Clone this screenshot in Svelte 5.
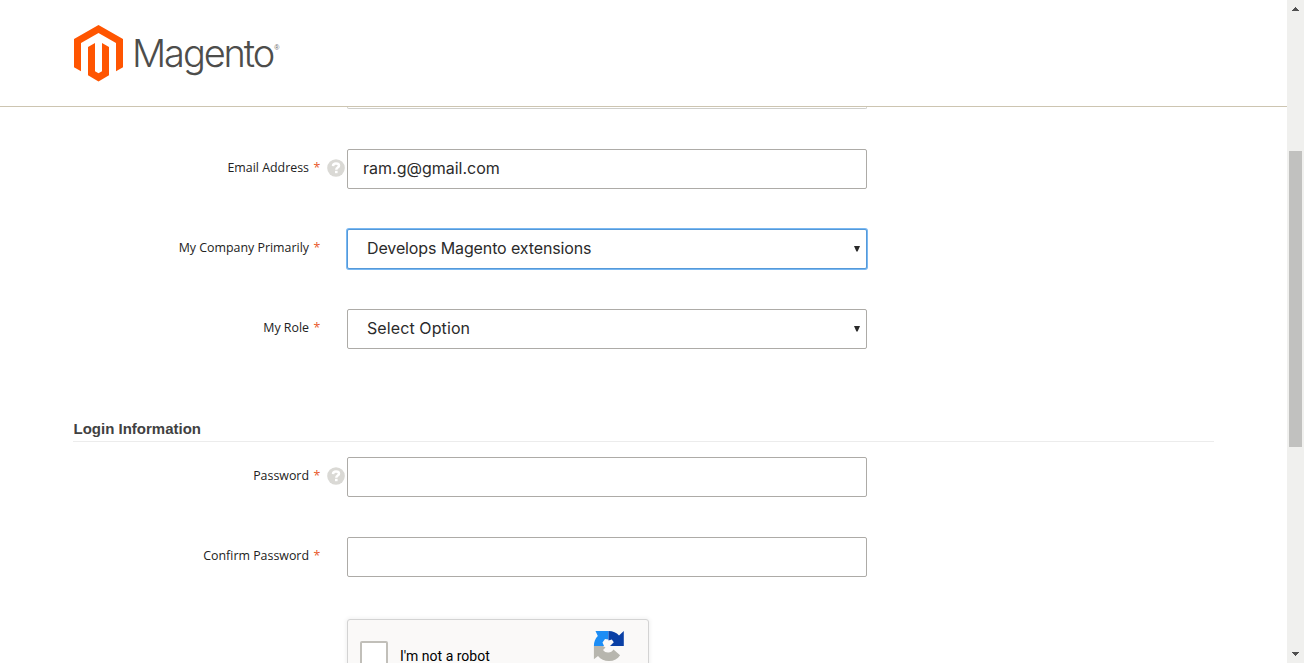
<script>
  const account = [
    { label: 'Email Address', value: 'ram.g@gmail.com', help: true, type: 'input' },
    { label: 'My Company Primarily', value: 'Develops Magento extensions', type: 'select', focus: true, fit: 'company' },
    { label: 'My Role', value: 'Select Option', type: 'select', fit: 'role' }
  ];
  const login = [
    { label: 'Password', value: '', help: true, type: 'input' },
    { label: 'Confirm Password', value: '', type: 'input' }
  ];
</script>

{#snippet row(f)}
  <div class="row">
    <div class="label"><span>{f.label}</span><span class="star">*</span></div>
    <div class="help">
      {#if f.help}
        <svg width="18" height="18" viewBox="0 0 18 18">
          <circle cx="9" cy="9" r="8.8" fill="#dad9d5" />
          <path d="M6 7.100C6.100 5.300 7.200 4.600 9 4.600s3 .8 3 2.200c0 1.900-2.700 1.700-2.700 3.900" fill="none" stroke="#fff" stroke-width="2.500" />
          <rect x="8" y="11.800" width="2.600" height="2.400" fill="#fff" />
        </svg>
      {/if}
    </div>
    <div class="field {f.type}" class:focus={f.focus}>
      <span class="value {f.fit ?? ''}">{f.value}</span>
      {#if f.type === 'select'}
        <svg class="arrow" width="6" height="6" viewBox="0 0 6 6"><path d="M0 0h6L3.6 5.5H2.4z" fill="#2a2a2a" /></svg>
      {/if}
    </div>
  </div>
{/snippet}

<div class="screen">
  <div class="page">
    <header>
      <svg class="mark" width="50" height="57" viewBox="0 0 50 57">
        <path fill="#ff5501" d="M24.5 0 49 14.1v28.2l-7 4V18.1L24.5 8 7 18.1v28.2l-7-4V14.1z" />
        <path fill="#ff5501" d="M14 22l7-4v28.3l3.5 2 3.5-2V18l7 4v28.3l-10.500 6.1L14 50.300z" />
      </svg>
      <span class="wordmark">Magento</span><span class="reg">®</span>
    </header>
    <main>
      <div class="clipped"></div>
      <section class="account">
        {#each account as f}{@render row(f)}{/each}
      </section>
      <h2>Login Information</h2>
      <section class="login">
        {#each login as f}{@render row(f)}{/each}
      </section>
      <div class="captcha">
        <div class="check"></div>
        <span class="robot">I'm not a robot</span>
        <svg class="recaptcha" width="32" height="32" viewBox="0 0 32 32">
          <path fill="#1c8df5" d="M15.500 1v8.500L12 9l-2.500 3.500L11 16H.9C.9 12 2.200 8.500 4.800 6L2.500 1z" />
          <path fill="#0a40a5" d="M15.500 1c4.500 0 8 1.700 10.500 4.400L30.800 1v15H17l3.800-3.800-2-2.700-3.300 1z" />
          <path fill="#b7b6ae" d="M.9 16h9l2.600 1.500-2.500 2.500c1.300 1.800 3.100 2.600 5.400 2.500 2.200-.1 3.900-1.200 5.100-3l6.600 5.700C24.700 28.800 21 31 16 31c-4.700 0-8.300-1.700-11-5L.9 29.200z" />
        </svg>
      </div>
    </main>
  </div>
  <div class="scrollbar">
    <svg width="7" height="4" viewBox="0 0 7 4" shape-rendering="crispEdges"><path d="M3 0h1v1h1v1h1v1h1v1H0V3h1V2h1V1h1z" fill="#505050" /></svg>
    <div class="thumb"></div>
    <svg width="7" height="4" viewBox="0 0 7 4" shape-rendering="crispEdges"><path d="M0 0h7v1H6v1H5v1H4v1H3V3H2V2H1V1H0z" fill="#505050" /></svg>
  </div>
</div>

<style>
  :global(body) { overflow: hidden; }
  .screen { display: flex; width: 1304px; height: 663px; overflow: hidden; background: #fff; }
  .screen, .screen * { box-sizing: border-box; }
  .page { width: 1287px; height: 663px; overflow: hidden; }
  svg { display: block; flex: none; }
  header { display: flex; align-items: flex-start; height: 107px; padding: 25px 0 0 74px; border-bottom: 1px solid #cdc5b1; }
  .wordmark { margin: 4px 0 0 8px; white-space: nowrap; font: 300 38px/48px Inter, sans-serif; letter-spacing: -2.1px; color: #4d4d4b; }
  .reg { margin: 18px 0 0 1px; font: 7px/10px "Liberation Sans", sans-serif; color: #666; }
  main { padding-left: 73px; }
  .clipped { width: 520px; height: 2px; margin-left: 274px; border: 1px solid #cfcfcb; border-top: 0; border-radius: 0 0 2px 2px; }
  .account { display: grid; gap: 40px; padding-top: 40px; }
  .login { display: grid; gap: 40px; padding-top: 15px; }
  .row { display: grid; grid-template-columns: 247px 27px 520px; height: 40px; }
  .label { display: flex; justify-content: flex-end; gap: 5px; padding-top: 10px; font: 12.400px/18px "Open Sans", sans-serif; white-space: nowrap; color: #222; }
  .label span:first-child { margin-right: -0.500px; }
  .star { width: 6px; margin-right: 0.500px; color: #e8582b; }
  .help { padding: 10px 0 0 7px; }
  .field { display: flex; align-items: center; justify-content: space-between; border: 1px solid #adaba7; border-radius: 2px; padding: 0 7px 1px 15px; font: 16px/20px Inter, sans-serif; color: #2b2b2b; background: #fff; }
  .select { padding-left: 19px; }
  .focus { border-color: #5599d9; box-shadow: 0 0 0 1px #79b8f2; }
  .arrow { margin-right: -1px; }
  .value { padding-bottom: 2px; white-space: nowrap; }
  .company { letter-spacing: -0.120px; }
  .role { letter-spacing: 0.100px; }
  h2 { width: 1141px; height: 23px; margin: 70px 0 0; padding-left: 0.500px; border-bottom: 1px solid #ececec; font: bold 15px/20px "Liberation Sans", sans-serif; color: #414141; }
  .captcha { display: flex; align-items: flex-start; width: 302px; height: 76px; margin: 42px 0 0 274px; border: 1px solid #d3d3d3; border-radius: 3px; background: #faf9f8; box-shadow: 0 0 4px 1px rgba(0, 0, 0, .06); }
  .check { width: 28px; height: 28px; margin: 21px 0 0 12px; border: 2px solid #c1bfb9; border-radius: 2px; background: #fff; }
  .robot { width: 193px; padding: 27px 0 0 12px; font: 14px/18px Roboto, sans-serif; color: #000; }
  .recaptcha { margin: 10px 0 0 12px; }
  .scrollbar { display: flex; flex-direction: column; align-items: center; width: 17px; height: 663px; padding: 7px 0 7px; background: #f0f0ee; }
  .thumb { width: 13px; height: 296px; margin: 140px 0 auto; background: #c1c1bf; }
</style>
